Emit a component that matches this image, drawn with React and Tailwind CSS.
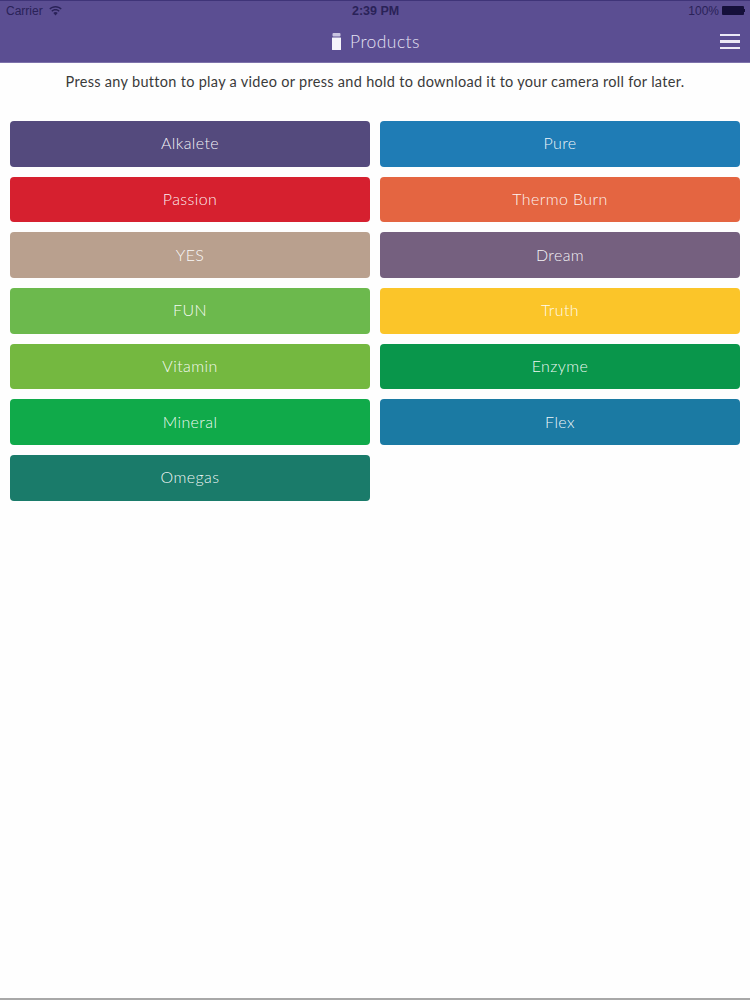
import React from 'react';

const products = [
  { name: 'Alkalete', color: 'bg-[#544a7d]' },
  { name: 'Pure', color: 'bg-[#1f7cb5]' },
  { name: 'Passion', color: 'bg-[#d6202f]' },
  { name: 'Thermo Burn', color: 'bg-[#e46541]' },
  { name: 'YES', color: 'bg-[#b9a08e]' },
  { name: 'Dream', color: 'bg-[#75607f]' },
  { name: 'FUN', color: 'bg-[#6cb94d]' },
  { name: 'Truth', color: 'bg-[#fbc529]' },
  { name: 'Vitamin', color: 'bg-[#74b840]' },
  { name: 'Enzyme', color: 'bg-[#09964b]' },
  { name: 'Mineral', color: 'bg-[#10aa4a]' },
  { name: 'Flex', color: 'bg-[#1b7aa3]' },
  { name: 'Omegas', color: 'bg-[#1a7b6a]' },
];

function StatusBar() {
  return (
    <div className="relative flex h-[20px] items-center justify-between pb-[1px] pl-[6px] pr-[5px] font-['Liberation_Sans',sans-serif] text-[12px] text-[#2a2258]">
      <div className="flex items-center gap-[6px]">
        <span>Carrier</span>
        <svg width="13" height="10" viewBox="0 0 13 10" fill="#2a2258">
          <path d="M6.5 0C4 0 1.9 1 .3 2.5l1 1.1C2.7 2.3 4.5 1.5 6.5 1.5s3.8.8 5.2 2.1l1-1.1C11.1 1 9 0 6.5 0z" />
          <path d="M6.5 3C4.8 3 3.4 3.6 2.3 4.7l1 1.1c.8-.8 2-1.3 3.2-1.3s2.4.5 3.2 1.3l1-1.1C9.6 3.6 8.2 3 6.5 3z" />
          <path d="M6.5 6c-.9 0-1.7.4-2.2 1l2.2 2.6L8.7 7c-.5-.6-1.3-1-2.2-1z" />
        </svg>
      </div>
      <span className="absolute left-[352px] top-[1px] text-[12.5px] font-bold">2:39 PM</span>
      <div className="flex items-center gap-[3px]">
        <span>100%</span>
        <div className="h-[9px] w-[22px] rounded-[1px] bg-[#15103a]" />
        <div className="-ml-[3px] h-[3px] w-[1px] bg-[#15103a]" />
      </div>
    </div>
  );
}

export default function App() {
  return (
    <div className="flex h-[1000px] w-[750px] flex-col bg-[#fefefe] font-['Lato',sans-serif]">
      <header className="h-[63px] border-t border-b border-[#3f3478] bg-[#5b4e92] border-b-[#7d72ab]">
        <StatusBar />
        <div className="flex h-[41px] items-center px-[10px]">
          <div className="flex-1" />
          <div className="flex items-center gap-[9px] pl-[2px] text-[17.5px] font-light tracking-[0.45px] text-[#e4e1f2]">
            <svg width="9" height="17" viewBox="0 0 9 17" className="mb-[1px]">
              <rect x="0.5" y="0" width="8" height="3.5" rx="1" fill="#c9c4e0" />
              <rect x="0" y="4.5" width="9" height="12.5" rx="0.5" fill="#f5f4fa" />
            </svg>
            <span className="pt-[2px]">Products</span>
          </div>
          <div className="flex flex-1 justify-end">
            <div className="flex w-[20px] flex-col gap-[4px]">
              <div className="h-[2.5px] bg-[#ebe9f5]" />
              <div className="h-[2.5px] bg-[#ebe9f5]" />
              <div className="h-[2.5px] bg-[#ebe9f5]" />
            </div>
          </div>
        </div>
      </header>

      <p className="mt-[10px] text-center text-[14.5px] leading-[18px] tracking-[0.3px] text-[#3a3a3a]">
        Press any button to play a video or press and hold to download it to your camera roll for later.
      </p>

      <div className="mt-[30px] grid grid-cols-2 gap-x-[10px] gap-y-[10px] px-[10px]">
        {products.map((product) => (
          <div
            key={product.name}
            className={`flex h-[45.7px] items-center justify-center rounded-[4px] pb-[1px] text-[16px] font-light tracking-[0.4px] text-white/95 ${product.color}`}
          >
            {product.name}
          </div>
        ))}
      </div>

      <div className="mt-auto h-[2px] bg-[#a8a8a8]" />
    </div>
  );
}
